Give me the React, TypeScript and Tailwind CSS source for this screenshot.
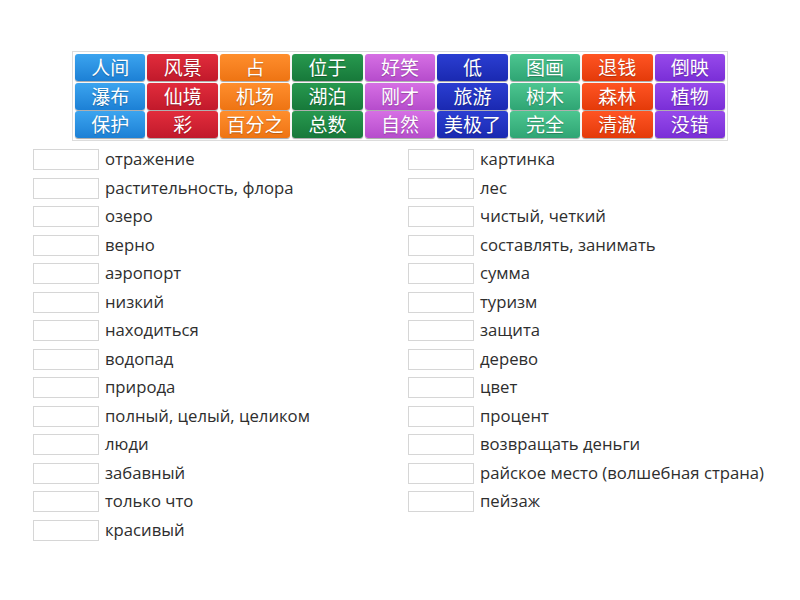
import React from 'react';

type Tile = { text: string; color: string };

// column colours, top to bottom gradient
const columns: { color: string; words: string[] }[] = [
  { color: 'bg-gradient-to-b from-[#3ba4ef] to-[#1c80d5]', words: ['人间', '瀑布', '保护'] },
  { color: 'bg-gradient-to-b from-[#e22c3c] to-[#c1192b]', words: ['风景', '仙境', '彩'] },
  { color: 'bg-gradient-to-b from-[#ff8e2c] to-[#ee7412]', words: ['占', '机场', '百分之'] },
  { color: 'bg-gradient-to-b from-[#27994f] to-[#17793a]', words: ['位于', '湖泊', '总数'] },
  { color: 'bg-gradient-to-b from-[#d66fe4] to-[#b64ccc]', words: ['好笑', '刚才', '自然'] },
  { color: 'bg-gradient-to-b from-[#2b3ed2] to-[#1a29b1]', words: ['低', '旅游', '美极了'] },
  { color: 'bg-gradient-to-b from-[#4cc690] to-[#2fa574]', words: ['图画', '树木', '完全'] },
  { color: 'bg-gradient-to-b from-[#ff5422] to-[#e43a08]', words: ['退钱', '森林', '清澈'] },
  { color: 'bg-gradient-to-b from-[#9749eb] to-[#7a2ed7]', words: ['倒映', '植物', '没错'] },
];

const tiles: Tile[] = [0, 1, 2].flatMap((row) =>
  columns.map((c) => ({ text: c.words[row], color: c.color }))
);

const leftItems = [
  'отражение',
  'растительность, флора',
  'озеро',
  'верно',
  'аэропорт',
  'низкий',
  'находиться',
  'водопад',
  'природа',
  'полный, целый, целиком',
  'люди',
  'забавный',
  'только что',
  'красивый',
];

const rightItems = [
  'картинка',
  'лес',
  'чистый, четкий',
  'составлять, занимать',
  'сумма',
  'туризм',
  'защита',
  'дерево',
  'цвет',
  'процент',
  'возвращать деньги',
  'райское место (волшебная страна)',
  'пейзаж',
];

const AnswerRow: React.FC<{ label: string }> = ({ label }) => (
  <div className="h-[28.5px] flex items-center">
    <div className="w-[66px] h-[21px] border border-[#d6d6d6] bg-white shrink-0"></div>
    <span className="ml-[6px] text-[16.7px] text-[#2e2e2e] whitespace-nowrap leading-none">{label}</span>
  </div>
);

const App: React.FC = () => {
  return (
    <div
      className="w-[800px] h-[600px] bg-white overflow-hidden"
      style={{ fontFamily: '"Open Sans", "Noto Sans CJK SC", sans-serif' }}
    >
      {/* word tiles */}
      <div className="ml-[72px] mt-[51px] w-[656px] border border-[#dcdcdc] p-[2px]">
        <div className="grid grid-cols-9 gap-x-[2px] gap-y-[1.7px]">
          {tiles.map((t, i) => (
            <div
              key={i}
              className={`${t.color} h-[27px] rounded-[3px] flex items-center justify-center text-white text-[19px] leading-none pb-[2px] shadow-[0_1px_1px_rgba(0,0,0,0.35)] [text-shadow:0_1px_1px_rgba(0,0,0,0.25)]`}
              style={{ fontFamily: '"Noto Sans CJK SC", sans-serif' }}
            >
              {t.text}
            </div>
          ))}
        </div>
      </div>

      {/* answer list */}
      <div className="mt-[4px] flex">
        <div className="ml-[33px] w-[375px]">
          {leftItems.map((l) => (
            <AnswerRow key={l} label={l} />
          ))}
        </div>
        <div className="w-[375px]">
          {rightItems.map((l) => (
            <AnswerRow key={l} label={l} />
          ))}
        </div>
      </div>
    </div>
  );
};

export default App;
